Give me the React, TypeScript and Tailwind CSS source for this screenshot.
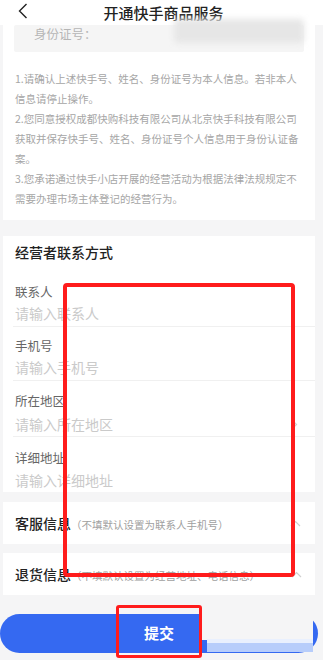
import React from "react";

const ChevronRight = () => (
  <svg width="7" height="11" viewBox="0 0 7 11" fill="none">
    <path d="M1 1l4.5 4.5L1 10" stroke="#d0d0d0" strokeWidth="1.2" />
  </svg>
);

const ChevronUp = () => (
  <svg width="11" height="7" viewBox="0 0 11 7" fill="none">
    <path d="M1 6l4.5-4.5L10 6" stroke="#cfcfcf" strokeWidth="1.2" />
  </svg>
);

type FieldProps = {
  label: string;
  placeholder: string;
  rowClass: string;
  inputClass: string;
  arrow?: boolean;
  last?: boolean;
};

const Field = ({ label, placeholder, rowClass, inputClass, arrow, last }: FieldProps) => (
  <div className={`${rowClass} ${last ? "" : "border-b border-[#f0f0f0]"} pr-[17px]`}>
    <div className="pl-[2px] text-[12.5px] leading-4 text-[#666]">{label}</div>
    <div className={`${inputClass} flex items-center justify-between pl-[2px]`}>
      <span className="text-[14px] leading-5 text-[#cacaca]">{placeholder}</span>
      {arrow && <ChevronRight />}
    </div>
  </div>
);

const App = () => {
  return (
    <div className="relative h-[660px] w-[323px] overflow-hidden bg-[#f5f5f6] font-['Noto_Sans_CJK_SC','Noto_Sans',sans-serif]">
      {/* header */}
      <div className="relative flex h-[25px] items-center justify-center bg-white">
        <svg className="absolute left-[18px] top-[3px]" width="10" height="16" viewBox="0 0 10 16" fill="none">
          <path d="M8.5 1L1.5 8l7 7" stroke="#222" strokeWidth="1.4" />
        </svg>
        <span className="pl-[4px] text-[15px] font-medium leading-6 text-[#222]">开通快手商品服务</span>
      </div>

      {/* identity notice card */}
      <div className="ml-[3px] w-[312px] bg-white px-[11px] pb-[11px]">
        <div className="flex h-[27px] items-start rounded-[2px] bg-[#f5f5f5] pl-[20px]">
          <span className="pt-[1px] text-[12.5px] leading-4 text-[#b5b5b5]">身份证号：</span>
          <div className="ml-auto mt-[-6px] h-[24px] w-[130px] rounded bg-[#e6e6e6] blur-[3px]" />
        </div>
        <div className="mt-[17px] pl-[1px] text-[10.5px] leading-5 text-[#a6a6a6]">
          <p>1.请确认上述快手号、姓名、身份证号为本人信息。若非本人信息请停止操作。</p>
          <p>2.您同意授权成都快购科技有限公司从北京快手科技有限公司获取并保存快手号、姓名、身份证号个人信息用于身份认证备案。</p>
          <p>3.您承诺通过快手小店开展的经营活动为根据法律法规规定不需要办理市场主体登记的经营行为。</p>
        </div>
      </div>

      {/* contact card */}
      <div className="ml-[3px] mt-[16px] w-[312px] bg-white pl-[10px] pt-[6px]">
        <div className="pl-[2px] text-[14px] font-medium leading-5 text-[#222]">经营者联系方式</div>
        <div className="mt-[11px]">
          <Field label="联系人" placeholder="请输入联系人" rowClass="pt-[11px] pb-[3px]" inputClass="mt-[3px]" />
          <Field label="手机号" placeholder="请输入手机号" rowClass="pt-[11px] pb-[3px]" inputClass="mt-[3px]" />
          <Field label="所在地区" placeholder="请输入所在地区" rowClass="pt-[12px] pb-[2px]" inputClass="mt-[5px]" arrow />
          <Field label="详细地址" placeholder="请输入详细地址" rowClass="pt-[13px] pb-[2px]" inputClass="mt-[4px]" last />
        </div>
      </div>

      {/* service info */}
      <div className="ml-[3px] mt-[10px] flex h-[42px] w-[312px] items-center justify-between bg-white pl-[12px] pr-[14px]">
        <div className="flex items-baseline">
          <span className="text-[14px] font-medium leading-5 text-[#222]">客服信息</span>
          <span className="text-[10.5px] text-[#a0a0a0]">（不填默认设置为联系人手机号）</span>
        </div>
        <ChevronUp />
      </div>

      {/* return info */}
      <div className="ml-[3px] mt-[9px] flex h-[42px] w-[312px] items-center justify-between bg-white pl-[12px] pr-[13px]">
        <div className="flex items-baseline">
          <span className="text-[14px] font-medium leading-5 text-[#222]">退货信息</span>
          <span className="text-[10.5px] text-[#a0a0a0]">（不填默认设置为经营地址、电话信息）</span>
        </div>
        <ChevronUp />
      </div>

      {/* submit */}
      <div className="mt-[19px] w-[318px]">
        <button className="flex h-[39px] w-full items-center justify-center rounded-full bg-[#3569f1] text-[15px] font-bold text-white">
          提交
        </button>
      </div>

      {/* screenshot artefacts over the button */}
      <div className="absolute left-[200px] top-[610px] h-[30px] w-[113px] bg-[#f5f5f6]" />
      <div className="absolute left-[207px] top-[639px] h-[13px] w-[106px] border-t-[4px] border-[#e9f0fe] bg-[#b7cdfb]" />

      {/* red annotation boxes */}
      <div className="absolute left-[63px] top-[283px] h-[294px] w-[232px] rounded-[4px] border-[4px] border-[#ff1c1c]" />
      <div className="absolute left-[116px] top-[605px] h-[53px] w-[86px] rounded-[3px] border-[3px] border-[#ff1c1c]" />
    </div>
  );
};

export default App;
